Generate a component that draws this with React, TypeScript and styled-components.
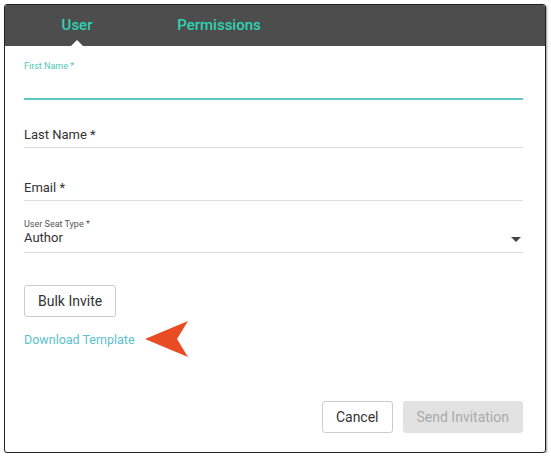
import React from "react";
import styled, { createGlobalStyle } from "styled-components";

const Global = createGlobalStyle`
  body { margin: 0; background: #fff; font-family: Roboto, "Liberation Sans", sans-serif; }
`;

const Frame = styled.div`
  margin: 4px 0 0 4px;
  width: 540px;
  height: 447px;
  border: 1px solid #222;
  border-radius: 3px;
  box-shadow: 1px 1px 2px rgba(0,0,0,0.4);
  display: flex;
  flex-direction: column;
  overflow: hidden;
`;

const Header = styled.div`
  height: 41px;
  background: #4d4d4d;
  display: flex;
  align-items: center;
  padding-left: 30px;
`;

const Tab = styled.div<{ $active?: boolean; $w: number }>`
  position: relative;
  width: ${(p) => p.$w}px;
  text-align: center;
  color: #2fd3b4;
  font-size: 15px;
  font-weight: 500;
  padding-bottom: 2px;
  &::after {
    content: "";
    display: ${(p) => (p.$active ? "block" : "none")};
    position: absolute;
    left: 50%;
    bottom: -12px;
    margin-left: -8px;
    border: 8px solid transparent;
    border-bottom-color: #fff;
    border-top-width: 0;
  }
`;

const Body = styled.div`
  flex: 1;
  padding: 14px 22px 0 19px;
  display: flex;
  flex-direction: column;
`;

const Field = styled.div<{ $focus?: boolean; $mt: number }>`
  margin-top: ${(p) => p.$mt}px;
  border-bottom: ${(p) => (p.$focus ? "2px solid #5cc8c0" : "1px solid #ddd")};
  position: relative;
`;

const Small = styled.div<{ $teal?: boolean }>`
  font-size: 9px;
  color: ${(p) => (p.$teal ? "#4fc9b4" : "#555")};
  line-height: 12px;
`;

const Value = styled.div<{ $h?: number }>`
  font-size: 13px;
  color: #333;
  line-height: 16px;
  height: ${(p) => p.$h ?? 16}px;
  padding-bottom: 4px;
`;

const Caret = styled.div`
  position: absolute;
  right: 2px;
  bottom: 10px;
  border: 5px solid transparent;
  border-top-color: #444;
  border-bottom-width: 0;
`;

const Button = styled.button<{ $disabled?: boolean }>`
  font-family: inherit;
  font-size: 14px;
  height: 32px;
  padding: 0 13px;
  border-radius: 3px;
  border: 1px solid ${(p) => (p.$disabled ? "#e2e2e2" : "#ccc")};
  background: ${(p) => (p.$disabled ? "#e2e2e2" : "#fff")};
  color: ${(p) => (p.$disabled ? "#aaa" : "#333")};
`;

const BulkRow = styled.div`
  margin-top: 32px;
`;

const LinkRow = styled.div`
  margin-top: 4px;
  display: flex;
  align-items: center;
  gap: 10px;
`;

const Link = styled.span`
  color: #5bc0cf;
  font-size: 12.5px;
`;

const Footer = styled.div`
  margin-top: auto;
  margin-bottom: 19px;
  display: flex;
  justify-content: flex-end;
  gap: 10px;
`;

export default function App() {
  return (
    <>
      <Global />
      <Frame>
        <Header>
          <Tab $active $w={84}>User</Tab>
          <Tab $w={200}>Permissions</Tab>
        </Header>
        <Body>
          <Field $focus $mt={0}>
            <Small $teal>First Name *</Small>
            <Value $h={22} />
          </Field>
          <Field $mt={27}>
            <Value>Last Name *</Value>
          </Field>
          <Field $mt={32}>
            <Value>Email *</Value>
          </Field>
          <Field $mt={17}>
            <Small>User Seat Type *</Small>
            <Value $h={18}>Author</Value>
            <Caret />
          </Field>
          <BulkRow>
            <Button>Bulk Invite</Button>
          </BulkRow>
          <LinkRow>
            <Link>Download Template</Link>
            <svg width="46" height="36" viewBox="0 0 46 36">
              <path d="M0 18 L43 0 L32 18 L43 36 Z" fill="#e84c22" />
            </svg>
          </LinkRow>
          <Footer>
            <Button>Cancel</Button>
            <Button $disabled>Send Invitation</Button>
          </Footer>
        </Body>
      </Frame>
    </>
  );
}
